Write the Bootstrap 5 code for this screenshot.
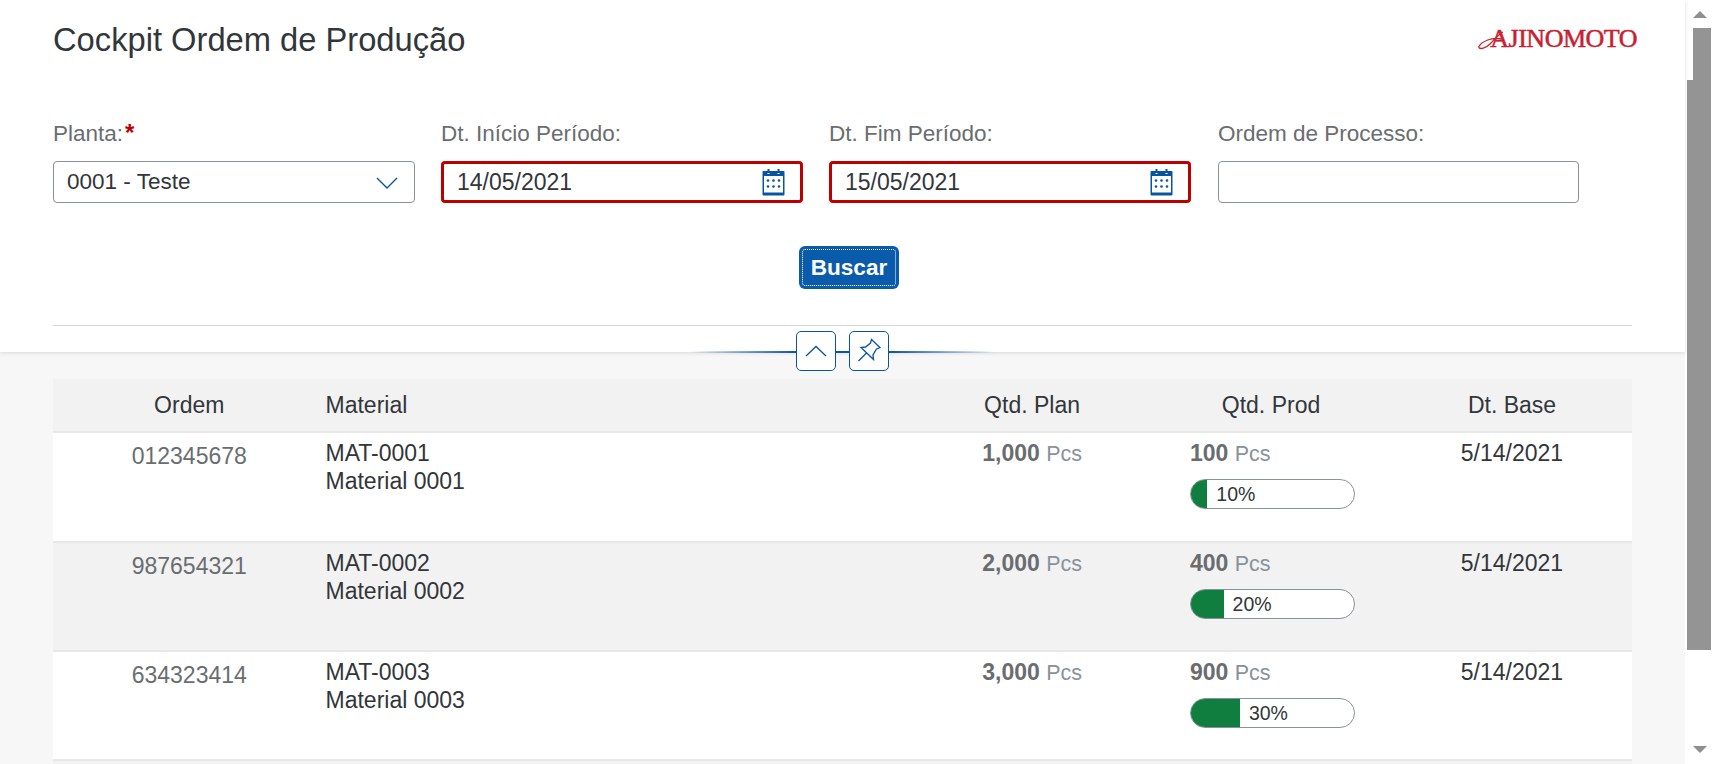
<!DOCTYPE html>
<html lang="pt">
<head>
    <meta charset="UTF-8">
    <meta name="viewport" content="width=device-width, initial-scale=1.0">
    <title>Cockpit Ordem de Produção</title>
    <link href="https://cdn.jsdelivr.net/npm/bootstrap@5.3.0/dist/css/bootstrap.min.css" rel="stylesheet">
    <style>
        html, body { height: 100%; overflow: hidden; }
        body { font-family: "Liberation Sans", Arial, sans-serif; font-size: 23px; color: #32363a; background: #f7f7f7; }

        .app-shell { height: 764px; overflow: hidden; }
        .app-main { width: 1685px; flex: none; }

        .page-head { position: relative; height: 352px; padding: 19px 53px 0; background: #fff; box-shadow: 0 1px 4px rgba(0,0,0,.13); }
        .page-title { margin: 0; font-size: 32.7px; font-weight: 400; line-height: 42px; color: #32363a; }
        .brand { position: relative; margin-top: -1px; margin-right: -5px; font-family: "Liberation Serif", serif; font-size: 26px; letter-spacing: -.5px; line-height: 42px; color: #c8202f; -webkit-text-stroke: .5px #c8202f; }
        .brand svg { position: absolute; left: -13px; top: 12px; }

        .filter-grid { display: grid; grid-template-columns: repeat(4, 362px); column-gap: 26px; margin-top: 59px; }
        .filter-label { display: block; height: 28px; margin-bottom: 13px; font-size: 22.5px; line-height: 28px; color: #6a6d70; }
        .filter-label b { margin-left: 2px; font-size: 24px; line-height: 20px; color: #bb0000; }
        .filter-wrap { position: relative; }
        .filter-last { margin-left: 1px; }
        .filter-input.form-control { height: 42px; padding: 0 45px 0 13px; font-size: 22.5px; color: #32363a; border: 1px solid #89919a; border-radius: 4px; box-shadow: none; }
        .filter-input.is-bad.form-control { padding-left: 13px; font-size: 23px; border: 3px solid #bb0000; }
        .filter-icon { position: absolute; right: 18px; top: 8px; }
        .filter-chevron { position: absolute; right: 17px; top: 16px; }

        .search-btn.btn { width: 100px; height: 43px; margin: 43px 0 0 13px; padding: 0; font-size: 22.6px; font-weight: 700; color: #fff; background: #0a5bab; border: 0; border-radius: 6px; outline: 1px dotted #fff; outline-offset: -4px; }
        .head-rule { height: 1px; margin-top: 36px; background: #d9d9d9; }

        .collapse-line { position: absolute; left: 690px; width: 305px; top: 351px; height: 2px; background: linear-gradient(90deg, rgba(8,84,160,0), #0854a0 35%, #0854a0 65%, rgba(8,84,160,0)); }
        .collapse-btns { position: absolute; left: 796px; top: 331px; gap: 13px; }
        .square-btn { width: 40px; height: 40px; padding: 0; background: #fff; border: 1px solid #0854a0; border-radius: 5px; }

        .orders-wrap { margin: 27px 53px 0; }
        .orders { width: 1579px; table-layout: fixed; border-collapse: collapse; }
        .orders th { height: 53px; padding: 0; font-weight: 400; color: #32363a; background: #f2f2f2; border-bottom: 2px solid #e8e8e8; vertical-align: middle; }
        .orders td { height: 109px; padding: 7px 0 0; line-height: 27.5px; vertical-align: top; background: #fff; border-bottom: 2px solid #e8e8e8; }
        .orders tr.first td { height: 110px; }
        .orders tr.alt td { background: #f2f2f2; }
        .orders td.order-no { padding-top: 10px; color: #6a6d70; text-align: center; }
        .qty-cell { padding-right: 68px !important; text-align: right; }
        .qty-head { padding-right: 70px !important; text-align: right; }
        .qty-num { font-weight: 700; color: #6a6d70; }
        .qty-unit { font-size: 21.5px; color: #89919a; }
        .prod-cell { padding-left: 40px !important; }

        .prod-bar { width: 165px; height: 30px; margin-top: 10px; overflow: hidden; background: #fff; border: 1px solid #89919a; border-radius: 15px; font-size: 19.5px; line-height: 28px; }
        .prod-fill { height: 100%; background: #107e3e; }
        .prod-text { padding-left: 9px; }

        .fake-scroll { width: 28px; flex: none; height: 764px; background: #fff; }
        .arrow-up { width: 0; margin: 11px 0 0 8px; border: 7px solid transparent; border-top: 0; border-bottom-color: #8f8f8f; }
        .thumb-top { width: 18px; height: 52px; margin: 10px 0 0 8px; background: #949494; }
        .thumb-main { width: 24px; height: 570px; margin-left: 2px; background: #949494; }
        .arrow-down { width: 0; margin: 96px 0 0 8px; border: 7px solid transparent; border-bottom: 0; border-top-color: #8f8f8f; }
    </style>
</head>
<body>
    <div class="app-shell d-flex">
        <div class="app-main">
            <div class="page-head">
                <div class="d-flex justify-content-between">
                    <h1 class="page-title">Cockpit Ordem de Produção</h1>
                    <div class="brand">
                        <svg width="30" height="22" viewBox="0 0 30 22" fill="none" stroke="#c8202f" stroke-width="1.3"><path d="M1.500 17C5 11 15 7 24 9M1.500 17C3 20 9 18 13 14C18 9 22 4 26 2"/></svg>
                        AJINOMOTO
                    </div>
                </div>

                <div class="filter-grid">
                    <div>
                        <label class="filter-label">Planta:<b>*</b></label>
                        <div class="filter-wrap">
                            <input class="form-control filter-input" value="0001 - Teste">
                            <svg class="filter-chevron" width="22" height="12" viewBox="0 0 22 12" fill="none" stroke="#0854a0" stroke-width="1.4"><path d="M1 1L11 11L21 1"/></svg>
                        </div>
                    </div>
                    <div>
                        <label class="filter-label">Dt. Início Período:</label>
                        <div class="filter-wrap">
                            <input class="form-control filter-input is-bad" value="14/05/2021">
                            <svg class="filter-icon" width="23" height="27" viewBox="0 0 23 27"><use href="#cal"/></svg>
                        </div>
                    </div>
                    <div>
                        <label class="filter-label">Dt. Fim Período:</label>
                        <div class="filter-wrap">
                            <input class="form-control filter-input is-bad" value="15/05/2021">
                            <svg class="filter-icon" width="23" height="27" viewBox="0 0 23 27"><use href="#cal"/></svg>
                        </div>
                    </div>
                    <div class="filter-last">
                        <label class="filter-label">Ordem de Processo:</label>
                        <input class="form-control filter-input">
                    </div>
                </div>

                <div class="text-center">
                    <button class="btn search-btn" type="button">Buscar</button>
                </div>
                <div class="head-rule"></div>

                <div class="collapse-line"></div>
                <div class="collapse-btns d-flex">
                    <button class="square-btn" type="button">
                        <svg class="d-block mx-auto" width="38" height="38" viewBox="0 0 38 38" fill="none" stroke="#0854a0" stroke-width="1.3"><path d="M9 24L19 14.500L29 24"/></svg>
                    </button>
                    <button class="square-btn" type="button">
                        <svg class="d-block mx-auto" width="38" height="38" viewBox="0 0 38 38" fill="none" stroke="#0854a0" stroke-width="1.3"><path d="M21.500 7.500L30 15.500L26.500 17L23 23L23.500 27.500L11 15.500L15.500 15L20.500 11ZM8.500 29L17 20.500"/></svg>
                    </button>
                </div>
            </div>

            <div class="orders-wrap">
                <table class="orders">
                    <colgroup>
                        <col style="width:272.5px"><col style="width:559.5px"><col style="width:265px"><col style="width:242px"><col style="width:240px">
                    </colgroup>
                    <thead>
                        <tr>
                            <th class="text-center">Ordem</th>
                            <th>Material</th>
                            <th class="qty-head">Qtd. Plan</th>
                            <th class="text-center">Qtd. Prod</th>
                            <th class="text-center">Dt. Base</th>
                        </tr>
                    </thead>
                    <tbody id="rows"></tbody>
                </table>
            </div>
        </div>

        <div class="fake-scroll">
            <div class="arrow-up"></div>
            <div class="thumb-top"></div>
            <div class="thumb-main"></div>
            <div class="arrow-down"></div>
        </div>
    </div>

    <svg width="0" height="0" class="d-block position-absolute">
        <symbol id="cal" viewBox="0 0 23 27">
            <path fill="#0854a0" d="M5.500 0h2v3h-2zM15.500 0h2v3h-2zM1.500 2h20a1 1 0 0 1 1 1v22.500a1 1 0 0 1-1 1h-20a1 1 0 0 1-1-1V3a1 1 0 0 1 1-1z"/>
            <rect x="2" y="7" width="19" height="16.500" fill="#fff"/>
            <rect x="5.500" y="4" width="2" height="1" fill="#fff"/>
            <rect x="15.500" y="4" width="2" height="1" fill="#fff"/>
            <g fill="#0854a0"><circle cx="6" cy="11.500" r="1.300"/><circle cx="11.500" cy="11.500" r="1.300"/><circle cx="17" cy="11.500" r="1.300"/><circle cx="6" cy="17.500" r="1.300"/><circle cx="11.500" cy="17.500" r="1.300"/><circle cx="17" cy="17.500" r="1.300"/></g>
        </symbol>
    </svg>

    <script src="https://cdn.jsdelivr.net/npm/bootstrap@5.3.0/dist/js/bootstrap.bundle.min.js"></script>
    <script>
        const orders = [
            { ordem: '012345678', code: 'MAT-0001', name: 'Material 0001', plan: '1,000', prod: '100', pct: 10 },
            { ordem: '987654321', code: 'MAT-0002', name: 'Material 0002', plan: '2,000', prod: '400', pct: 20 },
            { ordem: '634323414', code: 'MAT-0003', name: 'Material 0003', plan: '3,000', prod: '900', pct: 30 }
        ];

        const rows = document.getElementById('rows');
        orders.forEach((o, i) => {
            const tr = document.createElement('tr');
            tr.className = i % 2 ? 'alt' : (i === 0 ? 'first' : '');
            tr.innerHTML = `
                <td class="order-no">${o.ordem}</td>
                <td>${o.code}<br>${o.name}</td>
                <td class="qty-cell"><span class="qty-num">${o.plan}</span> <span class="qty-unit">Pcs</span></td>
                <td class="prod-cell">
                    <span class="qty-num">${o.prod}</span> <span class="qty-unit">Pcs</span>
                    <div class="prod-bar d-flex">
                        <div class="prod-fill" style="width:${o.pct}%"></div>
                        <div class="prod-text">${o.pct}%</div>
                    </div>
                </td>
                <td class="text-center">5/14/2021</td>`;
            rows.appendChild(tr);
        });
        // next row, only its top edge is on screen
        const next = document.createElement('tr');
        next.className = 'alt';
        next.innerHTML = '<td colspan="5"></td>';
        rows.appendChild(next);
    </script>
</body>
</html>
